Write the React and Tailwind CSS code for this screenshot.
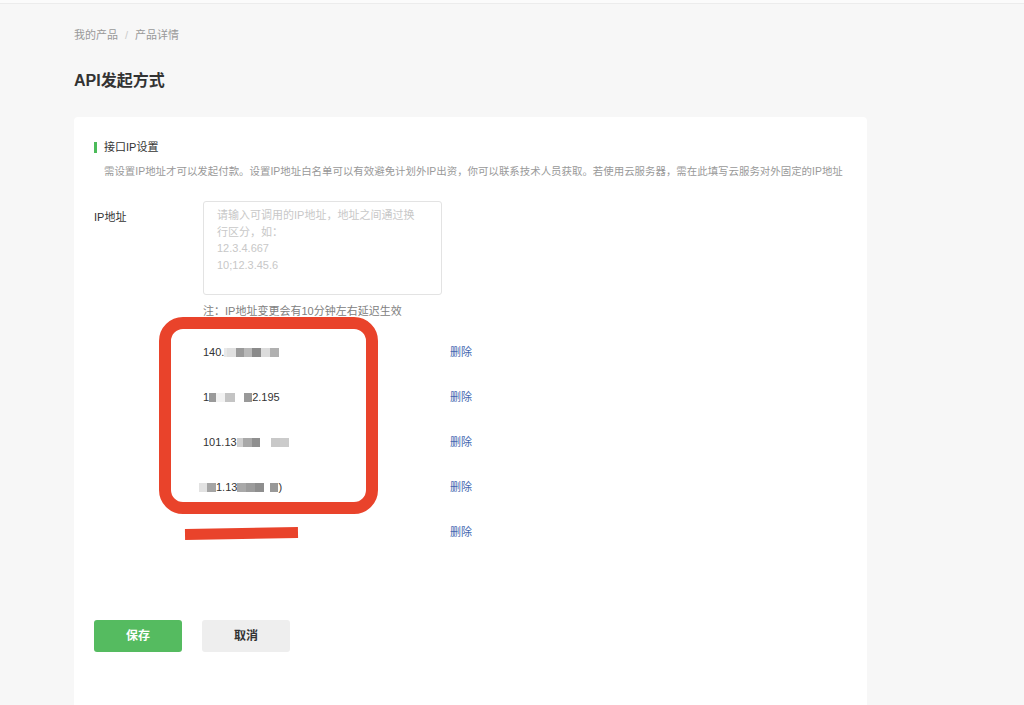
import React from 'react';

const ipRows = [
  {
    key: 1,
    shift: '',
    parts: [
      { t: '140.' },
      { w: 3, c: '#e8e8e8' },
      { w: 9, c: '#e0e0e0' },
      { w: 8, c: '#9a9a9a' },
      { w: 8, c: '#b8b8b8' },
      { w: 9, c: '#8a8a8a' },
      { w: 9, c: '#dcdcdc' },
      { w: 9, c: '#b0b0b0' },
    ],
  },
  {
    key: 2,
    shift: '',
    parts: [
      { t: '1' },
      { w: 7, c: '#9a9a9a' },
      { w: 9, c: '#f2f2f2' },
      { w: 10, c: '#c4c4c4' },
      { w: 9, c: 'transparent' },
      { w: 8, c: '#999999' },
      { t: '2.195' },
    ],
  },
  {
    key: 3,
    shift: '',
    parts: [
      { t: '101.13' },
      { w: 6, c: '#cfcfcf' },
      { w: 9, c: '#a8a8a8' },
      { w: 8, c: '#8f8f8f' },
      { w: 11, c: 'transparent' },
      { w: 9, c: '#c8c8c8' },
      { w: 9, c: '#cbcbcb' },
    ],
  },
  {
    key: 4,
    shift: 'ml-[-4px]',
    parts: [
      { w: 8, c: '#e2e2e2' },
      { w: 9, c: '#a5a5a5' },
      { t: '1.13' },
      { w: 9, c: '#a9a9a9' },
      { w: 9, c: '#9c9c9c' },
      { w: 9, c: '#8e8e8e' },
      { w: 6, c: 'transparent' },
      { w: 8, c: '#999999' },
      { t: ')' },
    ],
  },
  { key: 5, shift: '', parts: [] },
];

function IpRow({ row }) {
  return (
    <div className="flex h-[45px] items-center">
      <div className="w-[247px]">
        <div className={`flex items-center text-[11px] text-[#333] ${row.shift}`}>
          {row.parts.map((p, i) =>
            p.t ? (
              <span key={i}>{p.t}</span>
            ) : (
              <span key={i} className="inline-block h-[9px]" style={{ width: p.w, background: p.c }} />
            )
          )}
        </div>
      </div>
      <a className="cursor-pointer text-[11px] text-[#4468b0]">删除</a>
    </div>
  );
}

export default function App() {
  return (
    <div className="h-screen overflow-hidden bg-[#f7f7f7] font-[Liberation_Sans,Noto_Sans_CJK_SC,sans-serif]">
      <div className="h-[4px] border-b border-[#ececec] bg-[#fbfbfb]" />

      <div className="px-[74px]">
        {/* breadcrumb */}
        <div className="pt-[23px] text-[11px] leading-[16px] text-[#999]">
          <span>我的产品</span>
          <span className="mx-[7px] text-[#ccc]">/</span>
          <span>产品详情</span>
        </div>

        <h1 className="mt-[27px] text-[16px] font-bold leading-[22px] text-[#333]">API发起方式</h1>

        {/* card */}
        <div className="relative mt-[25px] w-[793px] rounded-[4px] bg-white pb-[80px] pl-[20px] pr-[20px] pt-[22px]">
          <div className="flex items-center text-[11px] leading-[17px] text-[#333]">
            <span className="mr-[7px] inline-block h-[11px] w-[3px] bg-[#4cbb5a]" />
            接口IP设置
          </div>
          <p className="mt-[8px] whitespace-nowrap pl-[10px] text-[10.45px] leading-[16px] text-[#999]">
            需设置IP地址才可以发起付款。设置IP地址白名单可以有效避免计划外IP出资，你可以联系技术人员获取。若使用云服务器，需在此填写云服务对外固定的IP地址
          </p>

          <div className="mt-[21px] flex">
            <label className="w-[109px] pt-[8px] text-[11px] leading-[17px] text-[#333]">IP地址</label>
            <div className="flex flex-col">
              <textarea
                className="h-[94px] w-[239px] resize-none rounded-[3px] border border-[#e3e3e3] pl-[13px] pr-[8px] pt-[5px] text-[11px] leading-[16.7px] text-[#333] outline-none placeholder:text-[#c8c8c8]"
                placeholder={'请输入可调用的IP地址，地址之间通过换\n行区分，如：\n12.3.4.667\n10;12.3.45.6'}
              />
              <p className="mt-[8px] text-[11px] leading-[17px] text-[#808080]">注：IP地址变更会有10分钟左右延迟生效</p>

              <div className="mt-[10px] flex flex-col">
                {ipRows.map((row) => (
                  <IpRow key={row.key} row={row} />
                ))}
              </div>
            </div>
          </div>

          <div className="mt-[65px] flex gap-[20px]">
            <button className="h-[32px] w-[88px] rounded-[3px] bg-[#55bb60] text-[12px] font-semibold text-white">保存</button>
            <button className="h-[32px] w-[88px] rounded-[3px] bg-[#eeeeee] text-[12px] font-semibold text-[#333]">取消</button>
          </div>

          {/* red annotation marks */}
          <div className="pointer-events-none absolute left-[85px] top-[200px] h-[197px] w-[219px] rounded-[24px] border-[12px] border-[#e9432b]" />
          <div className="pointer-events-none absolute left-[111px] top-[411px] h-[11px] w-[113px] -rotate-1 bg-[#e9432b]" />
        </div>
      </div>
    </div>
  );
}
